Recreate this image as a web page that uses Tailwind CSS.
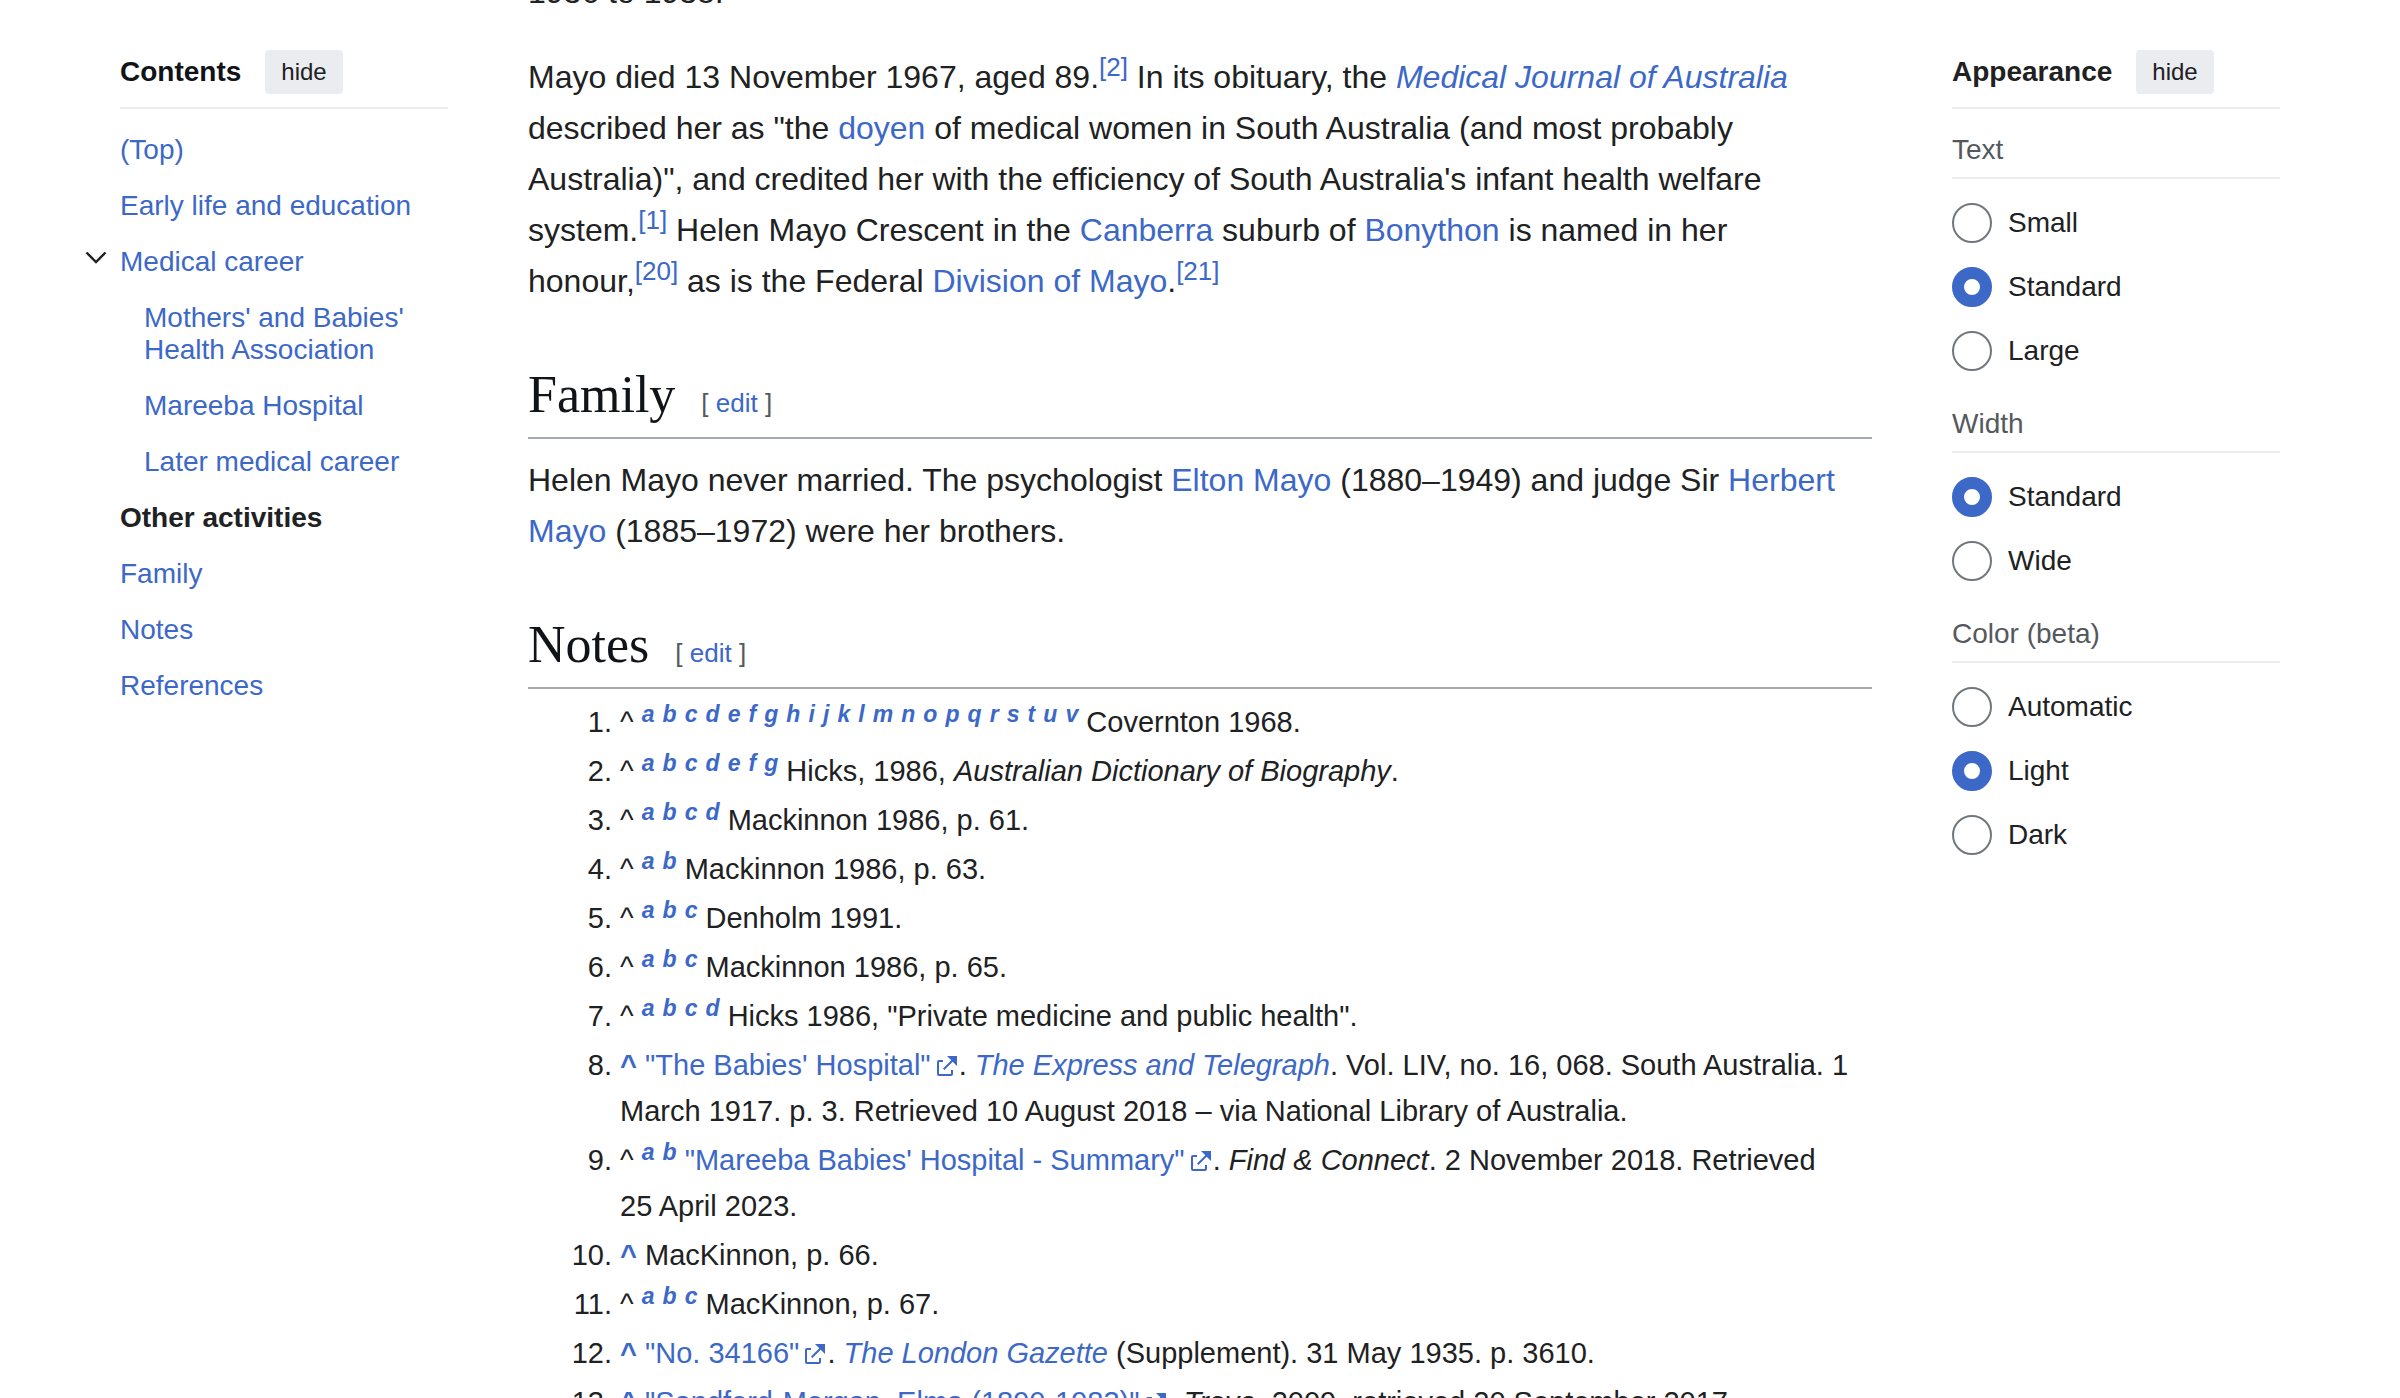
<!DOCTYPE html>
<html lang="en">
<head>
<meta charset="utf-8">
<title>Helen Mayo</title>
<script src="https://cdn.jsdelivr.net/npm/@tailwindcss/browser@4"></script>
</head>
<body class="h-screen overflow-hidden bg-white font-['Liberation_Sans',Arial,sans-serif] text-[28px] leading-8 text-[#202122]">
<svg class="hidden">
  <symbol id="ext" viewBox="0 0 12 12"><path fill="currentColor" d="M6 1h5v5L8.86 3.85 4.7 8 4 7.3l4.15-4.16zM2 3h2v1H2v6h6V8h1v2a1 1 0 0 1-1 1H2a1 1 0 0 1-1-1V4a1 1 0 0 1 1-1"/></symbol>
</svg>
<div class="grid grid-cols-[328px_minmax(0,1fr)_328px] gap-20 px-[120px]">

  <nav aria-label="Contents" class="pt-[50px]">
    <div class="flex items-center gap-6 border-b-2 border-[#eaecf0] pb-[13px]">
      <h2 class="font-bold text-[#101418]">Contents</h2>
      <button class="h-11 rounded bg-[#eaecf0] px-4 text-2xl">hide</button>
    </div>
    <ul class="pt-3 text-[#3c68c8] [&_a]:block [&_a]:pt-[13px] [&_a]:pb-[11px]">
      <li><a href="#">(Top)</a></li>
      <li><a href="#">Early life and education</a></li>
      <li class="relative">
        <button aria-label="Toggle Medical career subsection" class="absolute top-2 -left-10 p-1 text-[#202122]"><svg class="h-6 w-6" viewBox="0 0 24 24" fill="none" stroke="currentColor" stroke-width="2.4"><path d="M2.5 7.500 12 17l9.500-9.500"/></svg></button>
        <a href="#">Medical career</a>
        <ul class="pl-6">
          <li><a href="#">Mothers' and Babies' Health Association</a></li>
          <li><a href="#">Mareeba Hospital</a></li>
          <li><a href="#">Later medical career</a></li>
        </ul>
      </li>
      <li><a href="#" class="font-bold text-[#202122]">Other activities</a></li>
      <li><a href="#family">Family</a></li>
      <li><a href="#notes">Notes</a></li>
      <li><a href="#">References</a></li>
    </ul>
  </nav>

  <main class="-mt-[33px] text-[32px] leading-[51px] [&_a]:text-[#3c68c8]">
    <p>1936 to 1938.</p>
    <p class="mt-[34px] [&_sup]:-top-3 [&_sup]:text-[26px]">Mayo died 13 November 1967, aged 89.<sup><a href="#">[2]</a></sup> In its obituary, the <a href="#" class="italic">Medical Journal of Australia</a> described her as "the <a href="#">doyen</a> of medical women in South Australia (and most probably Australia)", and credited her with the efficiency of South Australia's infant health welfare system.<sup><a href="#">[1]</a></sup> Helen Mayo Crescent in the <a href="#">Canberra</a> suburb of <a href="#">Bonython</a> is named in her <span class="whitespace-nowrap">honour,<sup><a href="#">[20]</a></sup></span> as is the Federal <a href="#">Division of Mayo</a>.<sup><a href="#">[21]</a></sup></p>

    <div id="family" class="mt-[57px] flex items-baseline gap-[26px] border-b-2 border-[#a2a9b1] pb-[11px]">
      <h2 class="font-['Liberation_Serif',Georgia,serif] text-[52px] leading-[62px] text-[#101418]">Family</h2>
      <span class="text-[26px] leading-8 text-[#54595d]">[ <a href="#">edit</a> ]</span>
    </div>
    <p class="mt-4">Helen Mayo never married. The psychologist <a href="#">Elton Mayo</a> (1880–1949) and judge Sir <a href="#">Herbert Mayo</a> (1885–1972) were her brothers.</p>

    <div id="notes" class="mt-[57px] flex items-baseline gap-[26px] border-b-2 border-[#a2a9b1] pb-[11px]">
      <h2 class="font-['Liberation_Serif',Georgia,serif] text-[52px] leading-[62px] text-[#101418]">Notes</h2>
      <span class="text-[26px] leading-8 text-[#54595d]">[ <a href="#">edit</a> ]</span>
    </div>
    <ol class="mt-[10px] list-decimal space-y-[3px] pl-[92px] text-[29px] leading-[46px] [&_sup]:-top-[10px] [&_sup]:text-[23px] [&_sup]:leading-none [&_sup]:font-bold [&_sup]:italic [&_svg]:ml-1 [&_svg]:inline-block [&_svg]:h-6 [&_svg]:w-6 [&_svg]:align-[-3px]">
      <li>^ <sup><a href="#">a</a></sup> <sup><a href="#">b</a></sup> <sup><a href="#">c</a></sup> <sup><a href="#">d</a></sup> <sup><a href="#">e</a></sup> <sup><a href="#">f</a></sup> <sup><a href="#">g</a></sup> <sup><a href="#">h</a></sup> <sup><a href="#">i</a></sup> <sup><a href="#">j</a></sup> <sup><a href="#">k</a></sup> <sup><a href="#">l</a></sup> <sup><a href="#">m</a></sup> <sup><a href="#">n</a></sup> <sup><a href="#">o</a></sup> <sup><a href="#">p</a></sup> <sup><a href="#">q</a></sup> <sup><a href="#">r</a></sup> <sup><a href="#">s</a></sup> <sup><a href="#">t</a></sup> <sup><a href="#">u</a></sup> <sup><a href="#">v</a></sup> Covernton 1968.</li>
      <li>^ <sup><a href="#">a</a></sup> <sup><a href="#">b</a></sup> <sup><a href="#">c</a></sup> <sup><a href="#">d</a></sup> <sup><a href="#">e</a></sup> <sup><a href="#">f</a></sup> <sup><a href="#">g</a></sup> Hicks, 1986, <i>Australian Dictionary of Biography</i>.</li>
      <li>^ <sup><a href="#">a</a></sup> <sup><a href="#">b</a></sup> <sup><a href="#">c</a></sup> <sup><a href="#">d</a></sup> Mackinnon 1986, p. 61.</li>
      <li>^ <sup><a href="#">a</a></sup> <sup><a href="#">b</a></sup> Mackinnon 1986, p. 63.</li>
      <li>^ <sup><a href="#">a</a></sup> <sup><a href="#">b</a></sup> <sup><a href="#">c</a></sup> Denholm 1991.</li>
      <li>^ <sup><a href="#">a</a></sup> <sup><a href="#">b</a></sup> <sup><a href="#">c</a></sup> Mackinnon 1986, p. 65.</li>
      <li>^ <sup><a href="#">a</a></sup> <sup><a href="#">b</a></sup> <sup><a href="#">c</a></sup> <sup><a href="#">d</a></sup> Hicks 1986, "Private medicine and public health".</li>
      <li><a href="#" class="font-bold">^</a> <a href="#">"The Babies' Hospital"<svg><use href="#ext"/></svg></a>. <a href="#" class="italic">The Express and Telegraph</a>. Vol. LIV, no. 16, 068. South Australia. 1 March 1917. p. 3. Retrieved 10 August 2018 – via National Library of Australia.</li>
      <li>^ <sup><a href="#">a</a></sup> <sup><a href="#">b</a></sup> <a href="#">"Mareeba Babies' Hospital - Summary"<svg><use href="#ext"/></svg></a>. <i>Find &amp; Connect</i>. 2 November 2018. Retrieved <span class="whitespace-nowrap">25 April</span> 2023.</li>
      <li><a href="#" class="font-bold">^</a> MacKinnon, p. 66.</li>
      <li>^ <sup><a href="#">a</a></sup> <sup><a href="#">b</a></sup> <sup><a href="#">c</a></sup> MacKinnon, p. 67.</li>
      <li><a href="#" class="font-bold">^</a> <a href="#">"No. 34166"<svg><use href="#ext"/></svg></a>. <a href="#" class="italic">The London Gazette</a> (Supplement). 31 May 1935. p. 3610.</li>
      <li><a href="#" class="font-bold">^</a> <a href="#">"Sandford-Morgan, Elma (1890-1983)"<svg><use href="#ext"/></svg></a>, <i>Trove</i>, 2009, retrieved 20 September 2017</li>
    </ol>
  </main>

  <aside aria-label="Appearance" class="pt-[50px] [&_input]:h-10 [&_input]:w-10 [&_input]:appearance-none [&_input]:rounded-full [&_input]:border-2 [&_input]:border-[#72777d] [&_input]:bg-white [&_input:checked]:border-12 [&_input:checked]:border-[#3c68c8] [&_label]:flex [&_label]:items-center [&_label]:gap-4 [&_legend]:w-full [&_legend]:border-b-2 [&_legend]:border-[#eaecf0] [&_legend]:pt-px [&_legend]:pb-[11px] [&_legend]:text-[#54595d]">
    <div class="flex items-center gap-6 border-b-2 border-[#eaecf0] pb-[13px]">
      <h2 class="font-bold">Appearance</h2>
      <button class="h-11 rounded bg-[#eaecf0] px-4 text-2xl">hide</button>
    </div>
    <form class="flex flex-col gap-9 pt-6">
      <fieldset>
        <legend>Text</legend>
        <div class="flex flex-col gap-6 pt-6">
          <label><input type="radio" name="text">Small</label>
          <label><input type="radio" name="text" checked>Standard</label>
          <label><input type="radio" name="text">Large</label>
        </div>
      </fieldset>
      <fieldset>
        <legend>Width</legend>
        <div class="flex flex-col gap-6 pt-6">
          <label><input type="radio" name="width" checked>Standard</label>
          <label><input type="radio" name="width">Wide</label>
        </div>
      </fieldset>
      <fieldset>
        <legend>Color (beta)</legend>
        <div class="flex flex-col gap-6 pt-6">
          <label><input type="radio" name="color">Automatic</label>
          <label><input type="radio" name="color" checked>Light</label>
          <label><input type="radio" name="color">Dark</label>
        </div>
      </fieldset>
    </form>
  </aside>
</div>
</body>
</html>
